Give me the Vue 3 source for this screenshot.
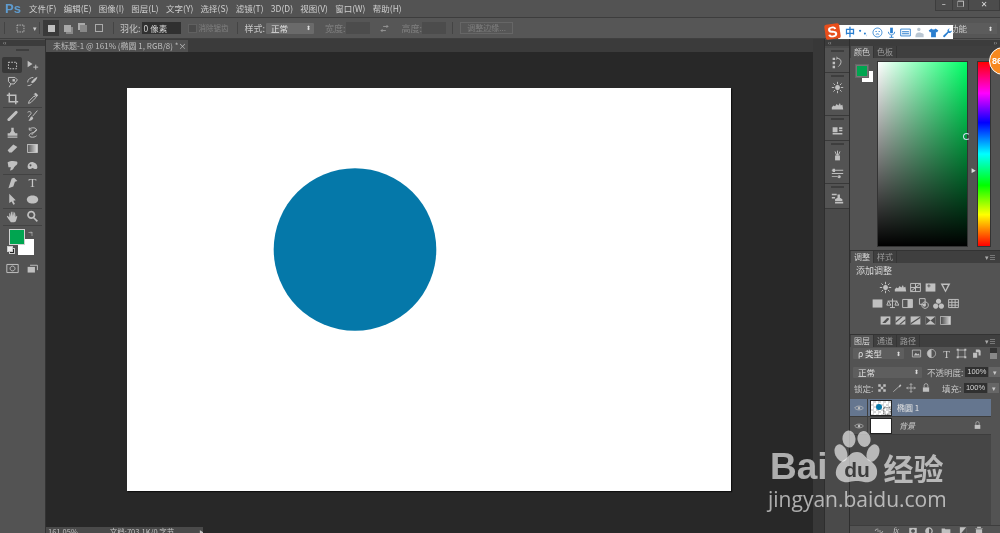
<script setup>
const menus = ['文件(F)','编辑(E)','图像(I)','图层(L)','文字(Y)','选择(S)','滤镜(T)','3D(D)','视图(V)','窗口(W)','帮助(H)']
const I = {
  marquee:{s:'M3 4h10v8H3z',dash:1},
  move:{f:'M2 2l6 4-6 4z',s:'M9 10h6M12 7v6'},
  lasso:{s:'M3 3h8l3 3-4 5H6L3 8zM6 11l-2 4',f:'M8 5h3v3H8z'},
  quick:{s:'M2 9c0-4 4-6 7-6M2 13c2 0 4 0 5-2',f:'M14 2c0 3-3 6-6 8l-2-1c2-3 5-6 8-7z'},
  crop:{s:'M4 1v11h11M1 4h11v11',w:1.800},
  dropper:{s:'M3 14l1-3 6-6 2 2-6 6zM10 3l3 3',f:'M10 2l2-1 3 3-2 2z'},
  heal:{f:'M3 11l8-8c1-1 2-1 3 0s0 2-1 3l-8 8c-1 1-2 1-3 0s0-2 1-3z'},
  brush:{s:'M2 4c3-2 5 0 4 2s-3 2-3 4M14 2L8 9',f:'M7 9l2 2c-1 3-4 4-6 3 2-1 2-4 4-5z'},
  stamp:{f:'M6.500 2h3v4l2 3h-7l2-3zM2 9h12v3H2zM2 13h12v1.500H2z'},
  hist:{s:'M4 4c3-3 9-2 9 1s-8 3-9 6 6 4 9 1M4 2v3h3M13 4L7 11'},
  eraser:{f:'M2 10l7-7 5 3-7 7H4z'},
  gradient:{grad:1},
  smudge:{f:'M2 4c3-2 8-2 11-1 2 1 1 4-1 5l-2 2c-1 3-3 4-5 4l1-4-3 0z'},
  burn:{f:'M2 9c0-4 4-6 7-5s5 3 5 6c0 2-2 3-4 2l-2-1c-2 1-3 2-5 1-1-1-1-2-1-3z',d:'M5.500 6.500a1.200 1.200 0 1 0 .1 0z'},
  pen:{f:'M10 2l4 4-3 1-2 6-6 2 2-6 2-6z'},
  T:{t:'T'},
  path:{f:'M4 1l8 8-3 .4 2 4-2 1-2-4-3 2z'},
  ellipse:{f:'M8 3c4 0 7 2 7 5s-3 5-7 5-7-2-7-5 3-5 7-5z'},
  hand:{f:'M4 9V4l1 0 1 4V2h1l1 6V2h1l1 6V3h1l1 6 1-2 1 1-2 6-2 1H6L3 11 1 8l1-1z'},
  zoom:{s:'M6.500 2a4 4 0 1 1-.1 0zM9.500 9.500l4.500 4.500',w:2},
  screen:{s:'M5 4h9v6',f:'M2 6h9v7H2z'},
  hist2:{f:'M2 2h3v3H2zM2 7h3v3H2zM2 12h3v3H2z',s:'M8 3c5 0 6 6 1 10M7 1l1 2-2 1'},
  sun:{s:'M8 1v3M8 12v3M1 8h3M12 8h3M3 3l2 2M11 11l2 2M13 3l-2 2M5 11l-2 2',f:'M8 5a3 3 0 1 0 .1 0z'},
  levels:{f:'M1 13V10l2-2 2 1 2-3 2 2 2-3 1 3 2-1 1 6z'},
  props:{f:'M2 4h6v6H2zM10 4h4v2h-4zM10 7h4v2h-4zM2 11h12v2H2z'},
  brushes:{s:'M5 3l2 5M11 3L9 8M8 2v6',f:'M5 8h6v6H5z'},
  sliders:{s:'M1 4h14M1 8h14',f:'M2 2h3v4H2zM10 10a2 2 0 1 0 .1 0zM1 11h8v1H1z'},
  clone:{f:'M1 2h6v2H1zM1 6h4v2H1zM8 3h3v4l3 2v2H5V9l3-2zM5 12h10v2H5z'},
  curves:{s:'M2 3h12v10H2zM2 13L14 3M8 3v10M2 8h12'},
  expo:{f:'M2 3h12v10H2z',d:'M3 12L13 4',p:'M4 6h4M6 4v4'},
  vib:{f:'M2 3h12L8 14z',d:'M5 5h6L8 11z'},
  hsl:{f:'M2 3h12v10H2z',d:'M2 7h12M7 3v4'},
  scale:{s:'M8 2v11M5 13h6M2 5h12M3 5l-2 5h5zM13 5l-2 5h5z'},
  bw:{f:'M8 3h6v10H8z',s:'M2 3h12v10H2z'},
  photo:{s:'M3 2h7v7H3zM10 6a4 4 0 1 1-.1 0z',f:'M9 8a2 2 0 1 0 .1 0z'},
  mixer:{f:'M8 2a3.200 3.200 0 1 0 .1 0zM4.500 8a3.200 3.200 0 1 0 .1 0zM11.500 8a3.200 3.200 0 1 0 .1 0z'},
  lut:{s:'M2 3h12v10H2zM2 6.500h12M2 10h12M6 3v10M10 3v10'},
  invert:{f:'M2 3h12v10H2z',d:'M4 11l6-6h2v2l-4 4z'},
  poster:{f:'M2 3h12v10H2z',d:'M2 9l7-6h2L2 11zM6 13l8-7v2l-6 5z'},
  thresh:{f:'M2 3h12v10H2z',d:'M2 13l12-8V3L2 11z'},
  select:{f:'M2 3h12v10H2z',d:'M2 3l6 5-6 5zM14 3L8 8l6 5z'},
  gmap:{grad:1},
  eye:{s:'M1 8c3-4 11-4 14 0-3 4-11 4-14 0z',f:'M8 6a2 2 0 1 0 .1 0z'},
  lock:{f:'M3 7h10v7H3z',s:'M5 7V4a3 3 0 0 1 6 0v3'},
  img:{s:'M2 3h12v10H2z',f:'M4 11l3-4 2 2 2-1 2 3z'},
  half:{s:'M8 2a6 6 0 1 1-.1 0z',f:'M8 2a6 6 0 0 0 0 12z'},
  frame:{s:'M3 3h10v10H3z',f:'M1 1h3v3H1zM12 1h3v3h-3zM1 12h3v3H1zM12 12h3v3h-3z'},
  doc:{f:'M3 7h6v7H3zM7 2h5l2 2v7h-3V6H7z'},
  link:{s:'M2 8a3 3 0 0 1 3-3h2M14 8a3 3 0 0 1-3 3H9M5 8h6'},
  mask:{f:'M2 3h12v10H2z',d:'M8 5a3 3 0 1 0 .1 0z'},
  folder:{f:'M1 4h5l1 1h8v8H1z'},
  newl:{f:'M3 2h10v12H3z',d:'M3 14l10-12v12z'},
  trash:{f:'M5 1h6v2h3v1H2V3h3zM3 5h10v9H3z'},
  adj:{f:'M8 2a6 6 0 1 1-.1 0z',d:'M8 4v8a4 4 0 0 0 0-8z'},
  swap:{s:'M3 11h7M3 11l2-2M3 11l2 2M13 5H6M13 5l-2-2M13 5l-2 2'},
  pattern:{f:'M2 2h4v4H2zM10 2h4v4h-4zM6 6h4v4H6zM2 10h4v4H2zM10 10h4v4h-4z'},
  paint:{s:'M2 14L13 4',f:'M13 2l2 2-3 3-1-2z'},
  cross:{s:'M8 1v14M1 8h14M8 1L6 3M8 1l2 2M8 15l-2-2M8 15l2-2M1 8l2-2M1 8l2 2M15 8l-2-2M15 8l-2 2'}
}
const toolGroups = [
  [['marquee','move'],['lasso','quick'],['crop','dropper']],
  [['heal','brush'],['stamp','hist'],['eraser','gradient'],['smudge','burn']],
  [['pen','T'],['path','ellipse']],
  [['hand','zoom']]
]
const dockGroups = [['hist2'],['sun','levels'],['props'],['brushes','sliders'],['clone']]
const adjRows = [['sun','levels','curves','expo','vib'],['hsl','scale','bw','photo','mixer','lut'],['invert','poster','thresh','select','gmap']]
const kinds = ['img','half','T','frame','doc']
const locks = ['pattern','paint','cross','lock']
const footer = ['link','fx','mask','adj','folder','newl','trash']
</script>

<template>
  <div class="app">
    <header class="menubar">
      <span class="ps">Ps</span>
      <nav class="menus"><span v-for="m in menus" :key="m">{{ m }}</span></nav>
    </header>

    <section class="options">
      <i class="sep s0"></i>
      <svg class="oi mq" viewBox="0 0 16 16"><path d="M3 3h10v10H3z" class="dash"/></svg>
      <span class="caret">▾</span>
      <i class="sep s1"></i>
      <span class="mode on"><b class="sq"></b></span>
      <span class="mode"><b class="sq two"></b></span>
      <span class="mode"><b class="sq three"></b></span>
      <span class="mode"><b class="sq four"></b></span>
      <i class="sep s2"></i>
      <span class="lab feather">羽化:</span>
      <span class="inp px">0 像素</span>
      <b class="check"></b>
      <span class="lab dim aa">消除锯齿</span>
      <i class="sep s4"></i>
      <span class="lab style">样式:</span>
      <span class="sel"><span>正常</span><em>⬍</em></span>
      <span class="lab dim wd">宽度:</span>
      <span class="inp blank"></span>
      <svg class="oi sw" viewBox="0 0 16 16"><path :d="I.swap.s" class="st"/></svg>
      <span class="lab dim hd">高度:</span>
      <span class="inp blank hh"></span>
      <i class="sep s5"></i>
      <span class="refine">调整边缘...</span>
    </section>

    <main class="body">
      <aside class="tools">
        <div class="strip"><span>‹‹</span></div>
        <div class="grip"></div>
        <div v-for="(g,gi) in toolGroups" :key="gi" class="tgroup">
          <div v-for="(r,ri) in g" :key="ri" class="trow">
            <span v-for="t in r" :key="t" class="tool" :class="{ act: t==='marquee' }">
              <svg viewBox="0 0 16 16">
                <text v-if="I[t].t" x="8" y="14" class="glyph">{{ I[t].t }}</text>
                <defs v-if="I[t].grad"><linearGradient :id="'g'+t"><stop offset="0" stop-color="#555"/><stop offset="1" stop-color="#ddd"/></linearGradient></defs>
                <rect v-if="I[t].grad" x="2" y="3" width="12" height="10" :fill="'url(#g'+t+')'" stroke="#ccc"/>
                <path v-if="I[t].f" :d="I[t].f" class="fl"/>
                <path v-if="I[t].d" :d="I[t].d" class="dk"/>
                <path v-if="I[t].s" :d="I[t].s" class="st" :class="{ dash: I[t].dash }" :style="I[t].w ? { strokeWidth: I[t].w } : null"/>
              </svg>
            </span>
          </div>
        </div>
        <div class="colors">
          <b class="bgc"></b><b class="fgc"></b>
          <svg class="arr" viewBox="0 0 16 16"><path d="M3 5h7l0 7M8 3l2 2-2 2" class="st"/></svg>
          <b class="mini"></b><b class="mini b"></b>
        </div>
        <div class="trow modes">
          <span class="tool"><svg viewBox="0 0 16 16"><path d="M1 3h14v10H1z" class="st"/><path d="M8 5a3 3 0 1 0 .1 0z" class="st"/></svg></span>
          <span class="tool"><svg viewBox="0 0 16 16"><path :d="I.screen.f" class="fl"/><path :d="I.screen.s" class="st"/></svg></span>
        </div>
      </aside>

      <section class="work">
        <div class="tabbar">
          <div class="tab"><span>未标题-1 @ 161% (椭圆 1, RGB/8) *</span><em>×</em></div>
        </div>
        <div class="canvas">
          <svg class="doc" viewBox="0 0 604 403"><circle cx="228" cy="161.500" r="81.300" fill="#0578a9"/></svg>
        </div>
        <footer class="status">
          <span class="pct">161.05%</span><span class="docinfo">文档:703.1K/0 字节</span><span class="play">▶</span>
        </footer>
      </section>

      <div class="gutter"></div>

      <aside class="dock">
        <div class="strip"><span>‹‹</span></div>
        <div v-for="(g,i) in dockGroups" :key="i" class="dgroup">
          <div class="grip"></div>
          <span v-for="d in g" :key="d" class="dicon"><svg viewBox="0 0 16 16"><path v-if="I[d].f" :d="I[d].f" class="fl"/><path v-if="I[d].s" :d="I[d].s" class="st"/></svg></span>
        </div>
      </aside>

      <aside class="panels">
        <div class="strip right"><span>››</span></div>
        <section class="panel color">
          <div class="ptabs"><span class="pt on">颜色</span><span class="pt">色板</span></div>
          <div class="colorbody">
            <div class="swatch"><b class="sbg"></b><b class="sfg"></b></div>
            <div class="field"><i class="pick"></i></div>
            <span class="hue-arrow">▶</span>
            <div class="hue"></div>
          </div>
        </section>
        <section class="panel adjust">
          <div class="ptabs"><span class="pt on">调整</span><span class="pt">样式</span><span class="pmenu">▾≡</span></div>
          <div class="addlabel">添加调整</div>
          <div v-for="(r,i) in adjRows" :key="i" class="adjrow">
            <span v-for="a in r" :key="a" class="adji">
              <svg viewBox="0 0 16 16">
                <defs v-if="I[a].grad"><linearGradient id="gm"><stop offset="0" stop-color="#444"/><stop offset="1" stop-color="#ddd"/></linearGradient></defs>
                <rect v-if="I[a].grad" x="2" y="3" width="12" height="10" fill="url(#gm)" stroke="#bbb"/>
                <path v-if="I[a].f" :d="I[a].f" class="fl"/>
                <path v-if="I[a].d" :d="I[a].d" class="dk"/>
                <path v-if="I[a].s" :d="I[a].s" class="st"/>
                <path v-if="I[a].p" :d="I[a].p" class="stdk"/>
              </svg>
            </span>
          </div>
        </section>
        <section class="panel layers">
          <div class="ptabs"><span class="pt on">图层</span><span class="pt">通道</span><span class="pt">路径</span><span class="pmenu">▾≡</span></div>
          <div class="lrow kind">
            <span class="sel ksel"><span>ρ 类型</span><em>⬍</em></span>
            <span class="kicons">
              <span v-for="k in kinds" :key="k" class="ki"><svg viewBox="0 0 16 16"><text v-if="I[k].t" x="8" y="14" class="glyph">{{ I[k].t }}</text><path v-if="I[k].f" :d="I[k].f" class="fl"/><path v-if="I[k].s" :d="I[k].s" class="st"/></svg></span>
            </span>
            <b class="toggle"></b>
          </div>
          <div class="lrow blend">
            <span class="sel bsel"><span>正常</span><em>⬍</em></span>
            <span class="lab oplab">不透明度:</span>
            <span class="inp pctbox">100%</span><span class="stepper">▾</span>
          </div>
          <div class="lrow lockrow">
            <span class="lab locklab">锁定:</span>
            <span class="locks">
              <span v-for="l in locks" :key="l" class="li"><svg viewBox="0 0 16 16"><path v-if="I[l].f" :d="I[l].f" class="fl"/><path v-if="I[l].s" :d="I[l].s" class="st"/></svg></span>
            </span>
            <span class="lab filllab">填充:</span>
            <span class="inp pctbox">100%</span><span class="stepper">▾</span>
          </div>
          <div class="list">
            <div class="layer sel-layer">
              <span class="eye"><svg viewBox="0 0 16 16"><path :d="I.eye.s" class="st"/><path :d="I.eye.f" class="fl"/></svg></span>
              <span class="thumb checker"><i class="dot"></i></span>
              <svg class="smart" viewBox="0 0 10 10"><path d="M1 1h8v8H1z" class="stdark"/></svg>
              <span class="lname">椭圆 1</span>
            </div>
            <div class="layer">
              <span class="eye"><svg viewBox="0 0 16 16"><path :d="I.eye.s" class="st"/><path :d="I.eye.f" class="fl"/></svg></span>
              <span class="thumb white"></span>
              <span class="lname bgname">背景</span>
              <span class="layerlock"><svg viewBox="0 0 16 16"><path :d="I.lock.f" class="fl"/><path :d="I.lock.s" class="st"/></svg></span>
            </div>
          </div>
          <div class="lfoot">
            <span v-for="f in footer" :key="f" class="fi">
              <span v-if="f==='fx'" class="fx">fx</span>
              <svg v-else viewBox="0 0 16 16"><path v-if="I[f].f" :d="I[f].f" class="fl"/><path v-if="I[f].d" :d="I[f].d" class="dk"/><path v-if="I[f].s" :d="I[f].s" class="st"/></svg>
            </span>
          </div>
        </section>
      </aside>
    </main>

    <div class="winbtns"><span>–</span><span>❐</span><span>✕</span></div>
    <div class="workspace"><span>功能</span><em>⬍</em></div>

    <div class="sogou">
      <span class="slogo">S</span>
      <div class="sbar">
        <span class="zh">中</span>
        <svg class="si" viewBox="0 0 16 16"><path d="M3 4a1.500 1.500 0 1 0 .1 0zM10 8a1.400 1.400 0 1 0 .1 0zM12 14c1-1 1.500-2 1-3" class="bl"/></svg>
        <svg class="si" viewBox="0 0 16 16"><path d="M8 1.500a6.500 6.500 0 1 1-.1 0zM5 6.500h2M9.500 6.500h2M5.500 11c2-1.400 3-1.400 5 0" class="bs"/></svg>
        <svg class="si" viewBox="0 0 16 16"><path d="M6 1h4v8H6z" class="bl"/><path d="M3.500 7c0 6 9 6 9 0M8 12v3M5 15h6" class="bs"/></svg>
        <svg class="si" viewBox="0 0 16 16"><path d="M1 3h14v10H1z" class="bs"/><path d="M3 6h10v1.500H3zM3 9h10v1.500H3z" class="bl"/></svg>
        <svg class="si" viewBox="0 0 16 16"><path d="M7 1a2.500 2.500 0 1 0 .1 0zM2 15c0-5 2-7 5-7s4 1 7 2v5z" class="gr"/></svg>
        <svg class="si" viewBox="0 0 16 16"><path d="M5 2L1 5l2 3 1.500-1v8h7V7l1.500 1 2-3-4-3c-1 2-5 2-6 0z" class="bl"/></svg>
        <svg class="si" viewBox="0 0 16 16"><path d="M14.500 5a4 4 0 0 1-5 3.500L4 14.500c-1.500 1-3-.5-2-2l6-5.500A4 4 0 0 1 11.500 2L9.500 4.500l2 2z" class="bl"/></svg>
      </div>
    </div>
    <div class="orange"><span>86</span></div>

    <div class="mark">
      <div class="mark-top">
        <span class="bai">Bai</span>
        <svg class="paw" viewBox="0 0 46 54">
          <ellipse cx="15" cy="9" rx="6.500" ry="8.500" transform="rotate(-6 15 9)"/>
          <ellipse cx="30" cy="9" rx="6.500" ry="8" transform="rotate(-12 30 9)"/>
          <ellipse cx="7" cy="23" rx="6" ry="9" transform="rotate(-22 7 23)"/>
          <ellipse cx="39" cy="23" rx="6" ry="9" transform="rotate(22 39 23)"/>
          <path d="M23 22c6 0 8 5 12 8 5 3 9 7 8 14-1 7-8 9-13 8-3-1-5-1-7-1s-5 0-8 1c-5 1-11-1-13-7-1-7 3-12 8-15 5-3 6-8 13-8z"/>
          <text x="23" y="47" class="du">du</text>
        </svg>
        <span class="jy">经验</span>
      </div>
      <div class="url">jingyan.baidu.com</div>
    </div>
  </div>
</template>

<style>
html, body { margin: 0; background: #282828; }
</style>

<style scoped>
.app { position: relative; width: 1000px; height: 533px; overflow: hidden; display: flex; flex-direction: column; background: #535353; color: #c8c8c8; font-family: "Noto Sans CJK SC", "Liberation Sans", sans-serif; font-size: 8.500px; line-height: 1; filter: blur(.35px); }
.app svg { display: block; }
.fl { fill: #c0c0c0; }
.st { fill: none; stroke: #c0c0c0; stroke-width: 1.200; }
.dash { stroke-dasharray: 2 1.500; fill: none; stroke: #c8c8c8; stroke-width: 1.200; }
.dk { fill: #505050; }
.stdk { fill: none; stroke: #505050; }
.glyph { fill: #c8c8c8; font-family: "Liberation Serif", serif; font-size: 16px; text-anchor: middle; }

.menubar { height: 17px; display: flex; align-items: center; border-bottom: 1px solid #3d3d3d; background: #535353; flex: none; }
.ps { width: 29px; padding-left: 5px; box-sizing: border-box; font: bold 13px "Liberation Sans", sans-serif; color: #5f9ccf; }
.menus { display: flex; gap: 7.300px; color: #cfcfcf; }

.options { height: 20px; flex: none; display: flex; align-items: center; background: #565656; border-bottom: 1px solid #3f3f3f; }
.sep { width: 1px; height: 12px; background: #444; flex: none; }
.s0 { margin-left: 4px; }
.oi { width: 11px; height: 11px; flex: none; }
.mq { margin-left: 10px; }
.caret { margin-left: 7px; font-size: 7px; width: 5px; flex: none; }
.s1 { margin-left: 1px; margin-right: 3px; }
.mode { width: 16px; height: 16px; display: flex; align-items: center; justify-content: center; flex: none; }
.mode.on { background: #3a3a3a; }
.sq { width: 7px; height: 7px; background: #c0c0c0; display: block; }
.sq.two { background: #a8a8a8; box-shadow: 2px 2px 0 #888; }
.sq.three { background: #888; box-shadow: -2px -2px 0 #aaa; }
.sq.four { background: transparent; border: 1px solid #aaa; width: 6px; height: 6px; }
.s2 { margin-left: 6px; }
.lab { color: #c6c6c6; flex: none; font-size: 9px; white-space: nowrap; }
.lab.dim { color: #808080; }
.feather { margin-left: 6px; }
.inp { background: #303030; height: 12px; display: flex; align-items: center; color: #d5d5d5; flex: none; box-sizing: border-box; }
.px { width: 39px; margin-left: 1px; padding-left: 2px; }
.check { width: 7px; height: 7px; background: #4a4a4a; border: 1px solid #606060; margin-left: 7px; flex: none; }
.aa { margin-left: 2px; font-size: 7.500px; }
.s4 { margin-left: 8px; }
.style { margin-left: 7px; }
.sel { background: #6a6a6a; height: 11px; display: flex; align-items: center; justify-content: space-between; padding: 0 3px 0 5px; box-sizing: border-box; color: #e2e2e2; flex: none; border-radius: 1px; }
.sel em, .workspace em { font-style: normal; font-size: 6px; color: #ddd; }
.options .sel { width: 48px; margin-left: 1px; }
.wd { margin-left: 11px; }
.blank { width: 24px; background: #4c4c4c; }
.sw { margin-left: 9px; opacity: .7; }
.hd { margin-left: 12px; }
.s5 { margin-left: 6px; }
.refine { margin-left: 7px; width: 53px; height: 12px; box-sizing: border-box; border: 1px solid #666; color: #7e7e7e; display: flex; align-items: center; justify-content: center; font-size: 8px; flex: none; }

.body { flex: 1; display: flex; min-height: 0; }
.tools { width: 46px; flex: none; background: #535353; border-right: 1px solid #333; box-sizing: border-box; display: flex; flex-direction: column; align-items: stretch; }
.strip { height: 6px; background: #3c3c3c; font-size: 6px; color: #aaa; padding-left: 3px; display: flex; align-items: center; flex: none; margin-top: 1px; }
.strip.right { justify-content: flex-end; padding-right: 3px; }
.grip { height: 2px; width: 13px; background: #3e3e3e; margin: 2px auto 1px; flex: none; }
.tools > .grip { margin-top: 3px; margin-bottom: 6px; }
.tgroup { border-bottom: 1px solid #424242; margin: 0 3px; }
.trow { display: flex; justify-content: flex-start; height: 16.500px; }
.tool { width: 20px; height: 16px; display: flex; align-items: center; justify-content: center; flex: none; }
.tool svg { width: 13px; height: 13px; }
.tool.act { background: #383838; border-radius: 2px; }
.tgroup .tool:first-child { margin-left: -1px; }
.tgroup:last-of-type { border-bottom: 0; }
.colors { position: relative; height: 30px; margin-top: 4px; }
.fgc, .bgc { position: absolute; display: block; box-sizing: border-box; }
.bgc { left: 18px; top: 9px; width: 16px; height: 16px; background: #fff; }
.fgc { left: 9px; top: -1px; width: 16px; height: 16px; background: #00a550; border: 1px solid #d0d0d0; }
.arr { position: absolute; left: 27px; top: 0; width: 8px; height: 8px; }
.mini { position: absolute; left: 9px; top: 18px; width: 4px; height: 4px; background: #222; border: 1px solid #ccc; }
.mini.b { left: 7px; top: 16px; background: #eee; }
.modes { margin: 0 0 0 2px; }

.work { width: 767px; flex: none; display: flex; flex-direction: column; background: #282828; }
.tabbar { height: 13px; background: #3b3b3b; flex: none; display: flex; align-items: flex-end; padding-top: 1px; box-sizing: border-box; }
.tab { width: 142px; height: 12px; background: #505050; color: #bdbdbd; display: flex; align-items: center; justify-content: space-between; box-sizing: border-box; padding: 0 3px 0 7px; font-size: 8px; white-space: nowrap; }
.tab em { font-style: normal; font-size: 8px; }
.canvas { flex: 1; padding: 36px 0 0 81px; min-height: 0; }
.doc { width: 604px; height: 403px; background: #fff; box-shadow: 1px 1px 1px #111; }
.status { height: 6px; flex: none; width: 157px; background: #4a4a4a; display: flex; align-items: flex-start; color: #c4c4c4; font-size: 7.500px; overflow: hidden; padding-left: 2px; box-sizing: border-box; white-space: nowrap; line-height: 9px; }
.docinfo { margin-left: 32px; }
.play { margin-left: 25px; font-size: 5px; }

.gutter { width: 11px; flex: none; background: #383838; }
.dock { width: 26px; flex: none; background: #4a4a4a; border-left: 1px solid #2e2e2e; border-right: 1px solid #2e2e2e; box-sizing: border-box; display: flex; flex-direction: column; }
.dock .strip { margin-bottom: 2px; }
.dgroup { border-bottom: 1px solid #393939; padding-bottom: 1px; display: flex; flex-direction: column; align-items: center; background: #535353; }
.dicon { height: 18px; width: 24px; display: flex; align-items: center; justify-content: center; }
.dicon svg { width: 13px; height: 13px; }

.panels { flex: 1; min-width: 0; background: #535353; display: flex; flex-direction: column; }
.panel { display: flex; flex-direction: column; border-bottom: 1px solid #333; box-sizing: border-box; flex: none; }
.ptabs { height: 12px; background: #3f3f3f; display: flex; align-items: stretch; position: relative; padding-left: 1px; flex: none; }
.pt { width: 22px; display: flex; align-items: center; justify-content: center; color: #9c9c9c; border-right: 1px solid #353535; font-size: 8px; }
.pt.on { background: #535353; color: #d2d2d2; }
.pmenu { position: absolute; right: 4px; top: 3px; font-size: 7px; color: #aaa; }
.color { height: 205px; }
.colorbody { position: relative; display: flex; align-items: flex-start; padding-top: 4px; height: 192px; box-sizing: border-box; }
.swatch { position: relative; width: 28px; flex: none; }
.swatch b { position: absolute; display: block; }
.sbg { left: 12px; top: 9px; width: 11px; height: 11px; background: #fff; }
.sfg { left: 6px; top: 3px; width: 12px; height: 12px; background: #00a550; border: 1px solid #777; box-sizing: border-box; box-shadow: 0 0 0 1px #666; }
.field { position: relative; width: 89px; height: 184px; flex: none; background: linear-gradient(to top, #000, rgba(0,0,0,0)), linear-gradient(to right, #fff, #00ff66); box-shadow: 0 0 0 1px #333; }
.pick { position: absolute; right: -3px; top: 71px; width: 5px; height: 5px; border: 1px solid #cde; border-radius: 50%; border-right-color: transparent; }
.hue-arrow { width: 11px; flex: none; font-size: 5px; color: #ddd; padding-top: 105px; padding-left: 4px; box-sizing: border-box; }
.hue { width: 12px; height: 184px; flex: none; background: linear-gradient(to bottom, #f00 0, #f0f 17%, #00f 33%, #0ff 50%, #0f0 67%, #ff0 83%, #f00 100%); box-shadow: 0 0 0 1px #333; }

.adjust { height: 84px; }
.addlabel { font-size: 9px; color: #d8d8d8; padding: 3px 0 0 6px; height: 16px; box-sizing: border-box; }
.adjrow { display: flex; justify-content: center; padding-right: 19px; height: 16.500px; align-items: center; }
.adji { width: 15.200px; display: flex; justify-content: center; }
.adji svg { width: 13px; height: 13px; }

.layers { flex: 1; border-bottom: 0; min-height: 0; }
.lrow { display: flex; align-items: center; padding-left: 3px; flex: none; }
.kind { height: 13px; }
.ksel { width: 51px; background: #5e5e5e; }
.kicons { display: flex; margin-left: 5px; }
.ki { width: 15px; display: flex; justify-content: center; }
.ki svg { width: 11px; height: 11px; }
.toggle { width: 7px; height: 11px; margin-left: 6px; background: linear-gradient(#333 45%, #888 45%); }
.blend { height: 18px; margin-top: 3px; }
.bsel { width: 69px; background: #5e5e5e; }
.oplab { margin-left: 5px; font-size: 8.500px; }
.pctbox { width: 23px; height: 10.500px; margin-left: 2px; font-size: 7.500px; justify-content: center; font-family: "Liberation Sans", sans-serif; }
.stepper { width: 11px; height: 10.500px; margin-left: 1px; background: #666; font-size: 7px; text-align: center; line-height: 10px; flex: none; }
.lockrow { height: 14px; }
.locklab { margin-left: 1px; width: 21px; font-size: 8.500px; }
.locks { display: flex; width: 67px; flex: none; }
.li { width: 14.500px; display: flex; justify-content: center; }
.li svg { width: 10px; height: 10px; }
.filllab { width: 20px; font-size: 8.500px; }
.list { flex: 1; margin-right: 9px; background: #464646; margin-top: 4px; min-height: 0; }
.layer { height: 17px; display: flex; align-items: center; border-bottom: 1px solid #3d3d3d; background: #535353; }
.sel-layer { background: #65768f; }
.eye { width: 18px; padding-left: 4px; box-sizing: border-box; flex: none; border-right: 1px solid #404040; height: 100%; display: flex; align-items: center; }
.eye svg { width: 10px; height: 10px; }
.thumb { width: 20px; height: 14px; margin-left: 3px; flex: none; position: relative; box-shadow: 0 0 0 1px #222; }
.checker { background: repeating-conic-gradient(#d8d8d8 0 25%, #fff 0 50%) 0 0 / 5px 5px; }
.white { background: #fff; }
.dot { position: absolute; left: 5px; top: 3px; width: 6px; height: 6px; border-radius: 50%; background: #0578a9; }
.smart { width: 8px; height: 8px; margin: 6px 0 0 -8px; flex: none; position: relative; }
.stdark { fill: none; stroke: #444; stroke-dasharray: 2 1; }
.lname { margin-left: 6px; color: #e2e2e2; font-size: 8px; white-space: nowrap; }
.bgname { font-style: italic; margin-left: 8px; color: #cfcfcf; }
.layerlock { margin-left: auto; margin-right: 9px; }
.layerlock svg { width: 9px; height: 9px; }
.lfoot { height: 7px; background: #535353; display: flex; padding-left: 21px; overflow: hidden; flex: none; border-top: 1px solid #3d3d3d; }
.fi { width: 16.700px; flex: none; display: flex; justify-content: center; }
.fi svg { width: 10px; height: 10px; }
.fx { font: italic 8px "Liberation Serif", serif; color: #ccc; }

.winbtns { position: absolute; top: 0; right: 0; width: 65px; height: 11px; display: flex; background: #4c4c4c; border: 1px solid #3d3d3d; border-top: 0; box-sizing: border-box; color: #ddd; font-size: 8px; }
.winbtns span { flex: 1; display: flex; align-items: center; justify-content: center; border-right: 1px solid #3d3d3d; font-family: "DejaVu Sans", sans-serif; }
.winbtns span:nth-child(3) { flex: 1.900; border-right: 0; }
.workspace { position: absolute; left: 930px; top: 23px; width: 67px; height: 11px; background: #5c5c5c; display: flex; align-items: center; justify-content: flex-end; gap: 21px; padding-right: 4px; box-sizing: border-box; color: #ccc; }

.sogou { position: absolute; left: 825px; top: 24px; display: flex; align-items: flex-start; }
.slogo { width: 15px; height: 15px; background: #e94e1b; color: #fff; font: bold 15px/15px "Liberation Sans", sans-serif; text-align: center; transform: rotate(-8deg); z-index: 1; border-radius: 2px; flex: none; }
.sbar { margin: 1px 0 0 -2px; width: 115px; height: 14px; background: #fff; display: flex; align-items: center; padding-left: 7px; box-sizing: border-box; gap: 3px; }
.zh { color: #2b7fd0; font-size: 10px; font-weight: 700; width: 10px; flex: none; }
.si { width: 11px; height: 11px; flex: none; }
.bl { fill: #2b7fd0; }
.bs { fill: none; stroke: #2b7fd0; stroke-width: 1.300; }
.gr { fill: #b9c6d2; }
.orange { position: absolute; left: 989px; top: 47px; width: 28px; height: 28px; border-radius: 50%; background: #f7891f; border: 1px solid #fff; box-sizing: border-box; color: #fff; font: bold 9px/26px "Liberation Sans", sans-serif; padding-left: 2px; }

.mark { position: absolute; left: 768px; top: 428px; color: rgba(255,255,255,.62); }
.mark-top { display: flex; align-items: flex-end; height: 56px; }
.bai { font: bold 37px/37px "Liberation Sans", sans-serif; margin-bottom: -1px; margin-left: 2px; }
.paw { width: 46px; height: 54px; fill: rgba(255,255,255,.62); margin-left: 6px; flex: none; }
.du { fill: #3c3c3c; font: bold 21px "Liberation Sans", sans-serif; text-anchor: middle; }
.jy { font: 700 30px/30px "Noto Sans CJK SC", sans-serif; margin-left: 4px; margin-bottom: 2px; white-space: nowrap; }
.url { font: 21px/23px "Open Sans", sans-serif; margin-top: 4px; white-space: nowrap; width: 180px; }
</style>
